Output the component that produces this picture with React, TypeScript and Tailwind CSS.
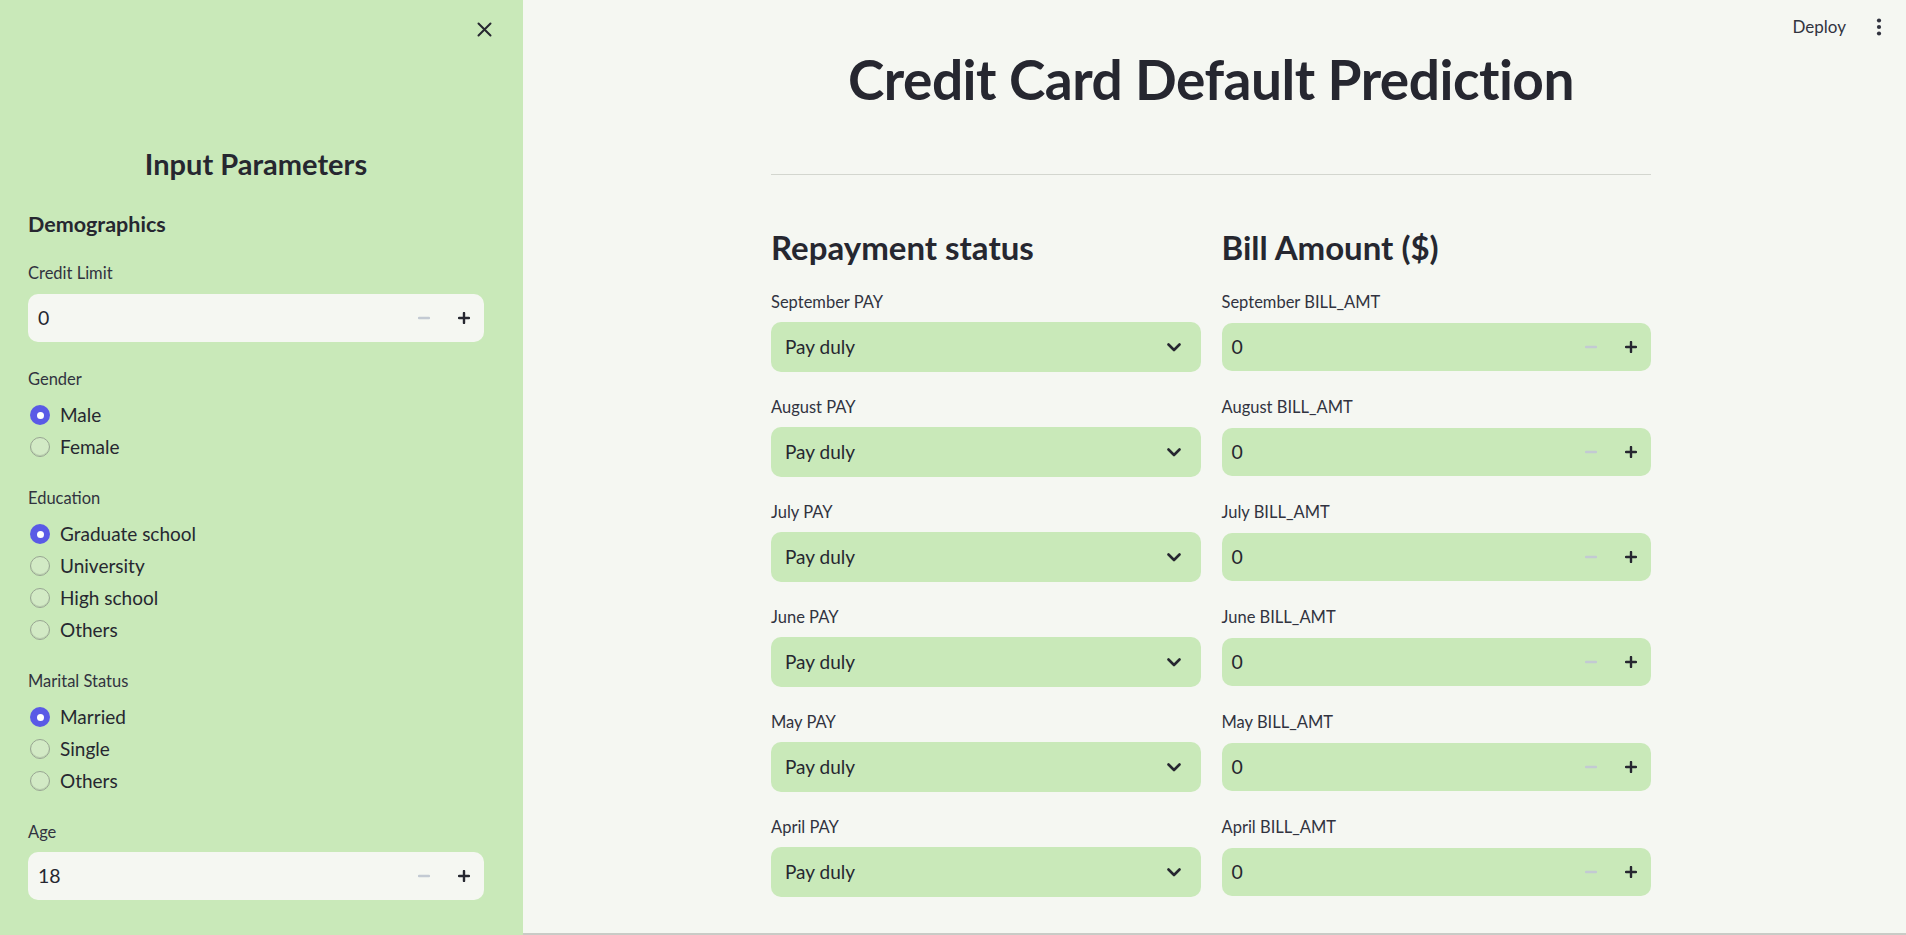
import { useState } from "react"

const MONTHS = ["September", "August", "July", "June", "May", "April"]

const FONT = "font-['Lato','Noto_Sans',sans-serif]"

function ChevronDown() {
  return (
    <svg width="14" height="9" viewBox="0 0 14 9" fill="none">
      <path d="M1.5 1.5 7 7l5.5-5.5" stroke="#262730" strokeWidth="2.6" strokeLinecap="round" strokeLinejoin="round" />
    </svg>
  )
}

function Stepper() {
  return (
    <div className="flex items-center h-full">
      <button className="w-[40px] h-full flex items-center justify-center">
        <svg width="12" height="12" viewBox="0 0 12 12">
          <path d="M1 6h10" stroke="#c3cad3" strokeWidth="2.4" strokeLinecap="round" />
        </svg>
      </button>
      <button className="w-[40px] h-full flex items-center justify-center">
        <svg width="12" height="12" viewBox="0 0 12 12">
          <path d="M1 6h10M6 1v10" stroke="#262730" strokeWidth="2.4" strokeLinecap="round" />
        </svg>
      </button>
    </div>
  )
}

function NumberInput({ value, bg }: { value: string; bg: string }) {
  return (
    <div className={`flex items-center h-[48px] rounded-[10px] pl-[10px] ${bg}`}>
      <span className="flex-1 text-[19.5px] text-[#262730]">{value}</span>
      <Stepper />
    </div>
  )
}

function Label({ children }: { children: React.ReactNode }) {
  return <div className="h-[28px] leading-[30px] text-[16.5px] text-[#31333f]">{children}</div>
}

function RadioGroup({ label, options, first }: { label: string; options: string[]; first?: boolean }) {
  const [sel, setSel] = useState(0)
  return (
    <div className={first ? "mt-[22px]" : "mt-[20px]"}>
      <Label>{label}</Label>
      <div className="mt-[7px] flex flex-col">
        {options.map((o, i) => (
          <div key={o} className="h-[32px] flex items-center cursor-pointer" onClick={() => setSel(i)}>
            <div className="w-[32px] flex items-center justify-start pl-[2px]">
              {sel === i ? (
                <span className="w-[20px] h-[20px] rounded-full bg-[#5a5ae6] flex items-center justify-center">
                  <span className="w-[7px] h-[7px] rounded-full bg-white" />
                </span>
              ) : (
                <span className="w-[20px] h-[20px] rounded-full border-[1.5px] border-[#98a592] bg-[#d2eac5] shadow-[inset_0_-1px_0_rgba(0,0,0,0.12)]" />
              )}
            </div>
            <span className="text-[19px] text-[#262730]">{o}</span>
          </div>
        ))}
      </div>
    </div>
  )
}

function Sidebar() {
  return (
    <aside className="w-[523px] shrink-0 h-full bg-[#c9e9b9] pl-[28px] pr-[39px]">
      <div className="h-[58px] flex items-center justify-end">
        <svg width="15" height="15" viewBox="0 0 15 15" className="mr-[-8px]">
          <path d="M1.5 1.5l12 12M13.5 1.5l-12 12" stroke="#262730" strokeWidth="2" strokeLinecap="round" />
        </svg>
      </div>
      <h2 className="mt-[86px] h-[40px] leading-[40px] text-center text-[29px] font-bold text-[#262730]">Input Parameters</h2>
      <h3 className="mt-[23px] h-[34px] leading-[34px] text-[21.5px] font-bold text-[#262730]">Demographics</h3>
      <div className="mt-[17px]">
        <Label>Credit Limit</Label>
        <div className="mt-[8px]">
          <NumberInput value="0" bg="bg-[#f5f7f2]" />
        </div>
      </div>
      <RadioGroup first label="Gender" options={["Male", "Female"]} />
      <RadioGroup label="Education" options={["Graduate school", "University", "High school", "Others"]} />
      <RadioGroup label="Marital Status" options={["Married", "Single", "Others"]} />
      <div className="mt-[20px]">
        <Label>Age</Label>
        <div className="mt-[7px]">
          <NumberInput value="18" bg="bg-[#f5f7f2]" />
        </div>
      </div>
    </aside>
  )
}

export default function App() {
  return (
    <div className={`flex h-[935px] w-full overflow-hidden bg-[#f5f7f2] ${FONT}`}>
      <Sidebar />
      <main className="relative flex-1 h-full overflow-hidden border-b-[2px] border-[#c9cbc6]">
        {/* header overlay */}
        <div className="absolute top-0 right-0 h-[54px] flex items-center gap-[30px] pr-[24px]">
          <span className="text-[17px] text-[#31333f]">Deploy</span>
          <svg width="6" height="20" viewBox="0 0 6 20">
            <circle cx="3" cy="3.5" r="2.1" fill="#31333f" />
            <circle cx="3" cy="10" r="2.1" fill="#31333f" />
            <circle cx="3" cy="16.5" r="2.1" fill="#31333f" />
          </svg>
        </div>

        <div className="ml-[248px] w-[880px] pt-[46px]">
          <h1 className="h-[66px] leading-[66px] text-center text-[55px] font-bold text-[#262730] tracking-[-0.5px]">
            Credit Card Default Prediction
          </h1>
          <hr className="mt-[62px] border-0 h-[1px] bg-[#d3d6cf]" />

          <div className="mt-[52px] grid grid-cols-2 gap-x-[21px]">
            <div>
              <h3 className="h-[40px] leading-[40px] text-[33px] font-bold text-[#262730]">Repayment status</h3>
              <div className="mt-[20px] flex flex-col gap-[20px]">
                {MONTHS.map((m) => (
                  <div key={m}>
                    <Label>{m} PAY</Label>
                    <div className="mt-[7px] h-[50px] rounded-[10px] bg-[#c9e9b9] flex items-center pl-[14px] pr-[20px]">
                      <span className="flex-1 text-[19px] text-[#262730]">Pay duly</span>
                      <ChevronDown />
                    </div>
                  </div>
                ))}
              </div>
            </div>
            <div>
              <h3 className="h-[40px] leading-[40px] text-[33px] font-bold text-[#262730]">Bill Amount ($)</h3>
              <div className="mt-[20px] flex flex-col gap-[20px]">
                {MONTHS.map((m) => (
                  <div key={m}>
                    <Label>{m} BILL_AMT</Label>
                    <div className="mt-[8px] mb-[1px]">
                      <NumberInput value="0" bg="bg-[#c9e9b9]" />
                    </div>
                  </div>
                ))}
              </div>
            </div>
          </div>
        </div>
      </main>
    </div>
  )
}
